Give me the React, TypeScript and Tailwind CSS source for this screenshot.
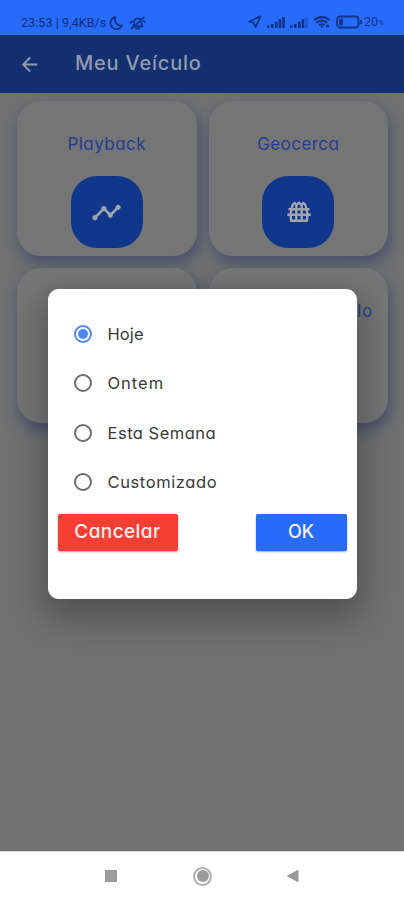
import type { ReactNode } from "react";
import { MdArrowBack, MdTimeline } from "react-icons/md";

function StatusBar() {
  return (
    <div className="flex h-[35px] shrink-0 items-end justify-between bg-[#266bf9] pr-[20px] pb-[4px] pl-[21px] font-['Roboto',sans-serif] text-[#123487]">
      <div className="flex items-center">
        <span className="text-[12.5px] leading-4 tracking-[0.08px] whitespace-nowrap text-[#0e2c78]">23:53 | 9,4KB/s</span>
        <svg className="ml-[3px] h-4 w-[15px]" viewBox="0 0 15 16" fill="none" stroke="currentColor" strokeWidth="1.8">
          <path d="M6.3 2.2A6 6 0 1 0 13 10.4 6 6 0 0 1 6.3 2.2Z" strokeLinejoin="round" />
        </svg>
        <svg className="ml-[5px] h-4 w-[17px]" viewBox="0 0 17 16" fill="none" stroke="currentColor" strokeWidth="1.8" strokeLinecap="round" strokeLinejoin="round">
          <path d="M4 11.5 5 9.4V6.3a3.8 3.8 0 0 1 7.4 0v3.1l1 2.1ZM7 13.6h3.4M2.5 13.5 15 2.5M1.2 8l1.6-1.5M15.8 7l-.8-1" />
        </svg>
      </div>
      <div className="flex items-center">
        <svg className="h-4 w-[14px]" viewBox="0 0 14 16" fill="none" stroke="currentColor" strokeWidth="1.8" strokeLinejoin="round">
          <path d="M12.6 2.2 1.2 7.6l4.5 1.2 1.9 4.4Z" />
        </svg>
        <Signal faded={false} />
        <Signal faded />
        <svg className="ml-[5px] h-4 w-[18px]" viewBox="0 0 18 16" fill="none" stroke="currentColor" strokeWidth="2.1">
          <path d="M1 6.2a11.2 11.2 0 0 1 15.5 0M3.4 8.8a7.6 7.6 0 0 1 10.7 0M6 11.3a4 4 0 0 1 5.5 0" />
          <path d="m8.7 14-1.8-2.2h3.6ZM13 10.8h3v2.6h-3Z" fill="currentColor" stroke="none" />
        </svg>
        <svg className="ml-[5px] h-4 w-[26px]" viewBox="0 0 26 16" fill="none" stroke="currentColor" strokeWidth="1.8">
          <rect x="1" y="2.5" width="21.5" height="11" rx="3" />
          <path d="M25 6v4" />
          <rect x="3" y="4.5" width="4" height="7" rx="1" fill="currentColor" stroke="none" />
        </svg>
        <span className="ml-[2px] text-[12.5px] leading-4">20</span>
        <span className="mt-[3px] text-[8px] leading-4">%</span>
      </div>
    </div>
  );
}

function Signal({ faded }: { faded: boolean }) {
  return (
    <svg className="ml-[5px] h-4 w-[18px]" viewBox="0 0 18 16" fill="currentColor">
      <rect x="0" y="11.5" width="2.6" height="2.5" />
      <rect x="4" y="10" width="2.6" height="4" />
      <rect x="8" y="7.5" width="2.6" height="6.5" />
      <rect x="11.7" y="5" width="2.6" height="9" />
      <rect x="15.3" y="3" width="2.5" height="11" opacity={faded ? 0.35 : 1} />
    </svg>
  );
}

function FenceIcon() {
  return (
    <svg className="ml-[1px] h-6 w-6" viewBox="0 0 24 24" fill="none" stroke="#a1a5ae" strokeWidth="2.4" strokeLinejoin="round">
      <path d="M4.2 21.5 3.4 14 5.6 5 7.5 3 9.6 4.8 12 2.6l2.4 2.2L16.5 3l1.9 2 2.2 9-.8 7.5" />
      <path d="M9.3 4.5v17M14.7 4.5v17" />
      <path d="M1.5 9.2h21M.3 14.8h23.4M3.4 20.8h17.2" />
    </svg>
  );
}

function Card({ title, children }: { title?: string; children?: ReactNode }) {
  return (
    <div className="flex h-[155px] flex-col items-center rounded-[24px] bg-[#757575] pt-[31px] shadow-[2px_7px_14px_1px_#4b526c]">
      <div className="h-6 text-[17px] leading-6 tracking-[0.45px] whitespace-nowrap text-[#233e8f]">{title}</div>
      {children && (
        <div className="mt-[20px] flex h-[72px] w-[72px] items-center justify-center rounded-[26px] bg-[#10378a]">{children}</div>
      )}
    </div>
  );
}

function Option({ label, tracking, checked = false }: { label: string; tracking: string; checked?: boolean }) {
  return (
    <div className="flex h-[49.4px] items-center">
      <span
        className={
          checked
            ? "flex h-[18px] w-[18px] items-center justify-center rounded-full border-2 border-[#5088f6]"
            : "flex h-[18px] w-[18px] items-center justify-center rounded-full border-2 border-[#6c6c6c]"
        }
      >
        {checked && <span className="h-[10px] w-[10px] rounded-full bg-[#5088f6]" />}
      </span>
      <span className={`ml-[16px] text-[16.5px] leading-6 whitespace-nowrap text-[#3a3a3a] ${tracking}`}>{label}</span>
    </div>
  );
}

function Dialog() {
  return (
    <div className="relative h-[310px] w-[309px] rounded-[11px] bg-white px-[10px] pt-[20.3px] shadow-[0_14px_34px_6px_rgba(0,0,0,0.28)]">
      <div className="pl-[16px]">
        <Option label="Hoje" tracking="tracking-[0.1px]" checked />
        <Option label="Ontem" tracking="tracking-[1px]" />
        <Option label="Esta Semana" tracking="tracking-[0.5px]" />
        <Option label="Customizado" tracking="tracking-[0.6px]" />
      </div>
      <div className="mt-[7px] flex justify-between">
        <button className="h-[37px] w-[120px] rounded-[2px] bg-[#f63f34] pb-px text-[19px] font-medium tracking-[0.4px] text-[#fff0ee] shadow-[0_1px_2px_rgba(0,0,0,0.35)]">
          Cancelar
        </button>
        <button className="h-[37px] w-[91px] rounded-[2px] bg-[#266bf9] pb-[2px] text-[18px] font-medium text-[#f0f5ff] shadow-[0_1px_2px_rgba(0,0,0,0.35)]">
          OK
        </button>
      </div>
    </div>
  );
}

export default function App() {
  return (
    <div className="flex h-[900px] w-[404px] flex-col overflow-hidden bg-white font-['Inter','Liberation_Sans',sans-serif] [font-feature-settings:'cv11']">
      <StatusBar />
      <div className="relative flex-1 overflow-hidden bg-[#717171]">
        <header className="flex h-[58px] items-center bg-[#12306f] pl-[18px] text-[#929bae]">
          <MdArrowBack size={23} />
          <h1 className="ml-[34px] pb-[3px] text-[20px] leading-7 font-medium tracking-[0.8px] whitespace-nowrap">Meu Veículo</h1>
        </header>
        <main className="grid grid-cols-2 gap-x-[12px] gap-y-[12px] pt-[8px] pr-[16px] pl-[17px]">
          <Card title="Playback">
            <MdTimeline size={31} color="#a1a5ae" />
          </Card>
          <Card title="Geocerca">
            <FenceIcon />
          </Card>
          <Card />
          <Card title="Dados do Veículo" />
        </main>
        <div className="absolute inset-0 flex items-center justify-center pt-[2px]">
          <Dialog />
        </div>
      </div>
      <nav className="flex h-[49px] shrink-0 items-center border-t border-[#dedede] bg-white pl-[105px]">
        <span className="h-[12px] w-[12px] bg-[#9c9c9c]" />
        <span className="ml-[76px] flex h-[19px] w-[19px] items-center justify-center rounded-full border-2 border-[#b0b0b0]">
          <span className="h-[12px] w-[12px] rounded-full bg-[#9c9c9c]" />
        </span>
        <svg className="ml-[74px] h-[14px] w-[13px]" viewBox="0 0 13 14">
          <path d="M.5 7 12.5.5v13Z" fill="#989898" />
        </svg>
      </nav>
    </div>
  );
}
